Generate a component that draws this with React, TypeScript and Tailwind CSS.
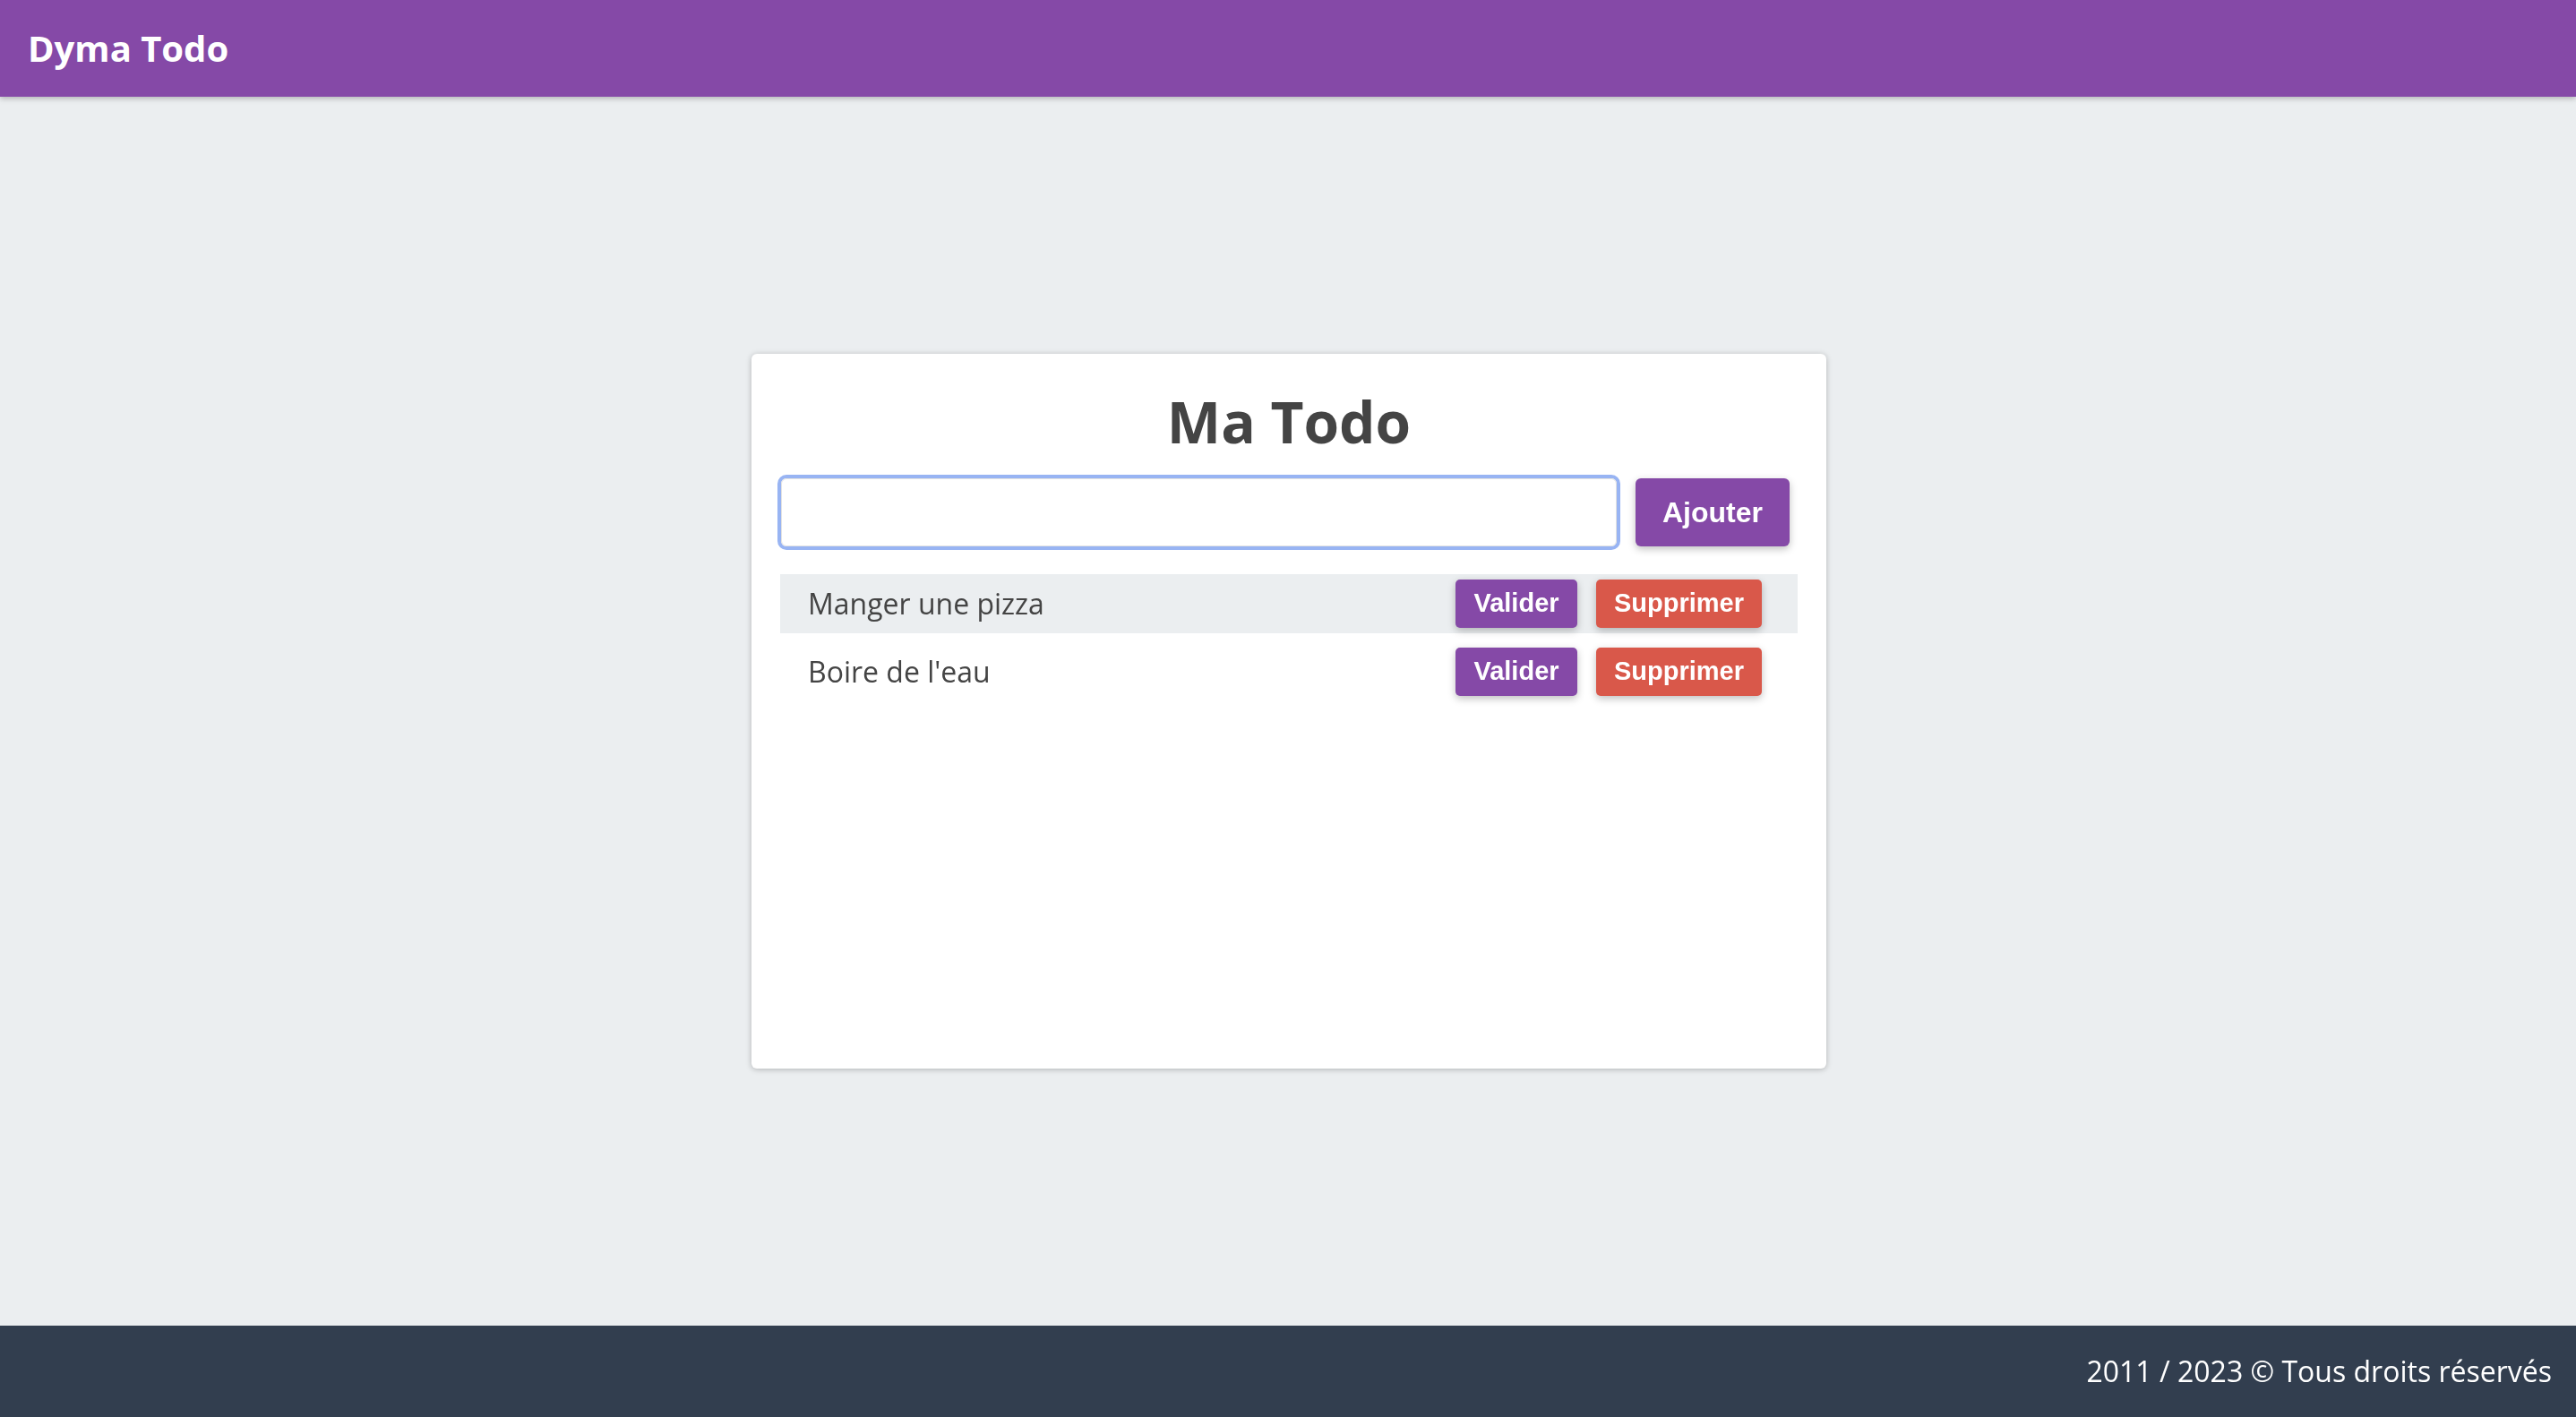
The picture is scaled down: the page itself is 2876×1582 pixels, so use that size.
import React, { useState } from "react";

type Todo = { id: number; name: string; done: boolean };

const App: React.FC = () => {
  const [todos, setTodos] = useState<Todo[]>([
    { id: 1, name: "Manger une pizza", done: false },
    { id: 2, name: "Boire de l'eau", done: false },
  ]);
  const [value, setValue] = useState("");

  const add = () => {
    if (!value.trim()) return;
    setTodos((t) => [...t, { id: Date.now(), name: value.trim(), done: false }]);
    setValue("");
  };

  return (
    <div className="min-h-screen flex flex-col bg-[#ebeef0] font-['Open_Sans',sans-serif]">
      {/* Header */}
      <header className="h-[108px] shrink-0 flex items-center px-[31px] bg-[#8549a7] shadow-[0_2px_6px_rgba(0,0,0,0.25)] z-10">
        <span className="text-[40px] font-bold text-white leading-none">Dyma Todo</span>
      </header>

      {/* Contenu */}
      <main className="flex-1 flex items-center justify-center pl-[2px]">
        <div className="w-[1200px] h-[798px] bg-white rounded-md shadow-[0_1px_6px_rgba(0,0,0,0.25)] px-8 pt-[36px]">
          <h1 className="text-center text-[64px] leading-[80px] font-bold text-[#444]">Ma Todo</h1>
          <div className="mt-[23px] flex items-center gap-[21px] pl-px">
            <input
              autoFocus
              value={value}
              onChange={(e) => setValue(e.target.value)}
              onKeyDown={(e) => e.key === "Enter" && add()}
              className="w-[933px] h-[76px] rounded-md border border-[#e2e2e2] ring-4 ring-[#98b4f3] outline-none px-4 text-[28px]"
            />
            <button
              onClick={add}
              className="w-[172px] h-[76px] rounded-md bg-[#8549a7] text-white text-[32px] font-bold font-['Liberation_Sans',sans-serif] shadow-[0_3px_8px_rgba(0,0,0,0.25)]"
            >
              Ajouter
            </button>
          </div>

          <ul className="mt-[31px] flex flex-col gap-[10px]">
            {todos.map((t, i) => (
              <li
                key={t.id}
                className={`h-[66px] flex items-center pl-[31px] pr-10 ${i === 0 ? "bg-[#ebeef0]" : ""}`}
              >
                <span className={`flex-1 text-[32px] text-[#444] ${t.done ? "line-through" : ""}`}>{t.name}</span>
                <div className="flex gap-[21px]">
                  <button
                    onClick={() => setTodos((ts) => ts.map((x) => (x.id === t.id ? { ...x, done: !x.done } : x)))}
                    className="w-[136px] h-[54px] rounded-[5px] bg-[#8549a7] text-white text-[29px] font-bold font-['Liberation_Sans',sans-serif] shadow-[0_3px_8px_rgba(0,0,0,0.25)]"
                  >
                    Valider
                  </button>
                  <button
                    onClick={() => setTodos((ts) => ts.filter((x) => x.id !== t.id))}
                    className="w-[185px] h-[54px] rounded-[5px] bg-[#d9584a] text-white text-[29px] font-bold font-['Liberation_Sans',sans-serif] shadow-[0_3px_8px_rgba(0,0,0,0.25)]"
                  >
                    Supprimer
                  </button>
                </div>
              </li>
            ))}
          </ul>
        </div>
      </main>

      {/* Footer */}
      <footer className="h-[102px] shrink-0 flex items-center justify-end px-[27px] bg-[#323e4f]">
        <span className="text-[32px] text-white">2011 / 2023 © Tous droits réservés</span>
      </footer>
    </div>
  );
};

export default App;
